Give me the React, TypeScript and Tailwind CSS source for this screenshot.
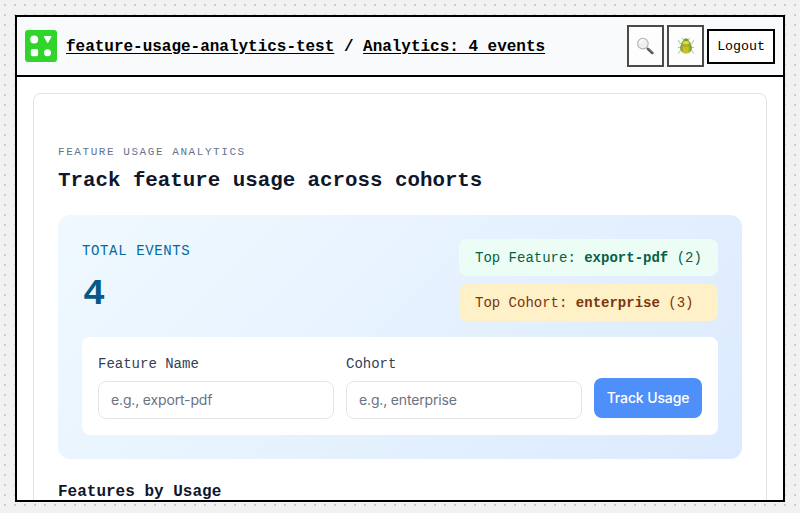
import React from 'react';

function Logo() {
  return (
    <svg className="h-8 w-8 shrink-0" viewBox="0 0 32 32">
      <rect width="32" height="32" rx="3" fill="#30d52c" />
      <circle cx="9.2" cy="9.6" r="4" fill="#fff" />
      <path d="M19.5 6.6h6.4l-3.2 5.7z" fill="#fff" stroke="#fff" strokeWidth="1.2" strokeLinejoin="round" />
      <rect x="5.8" y="19" width="7.3" height="7.2" rx="1.6" fill="#fff" />
      <circle cx="22.5" cy="22.7" r="3.5" fill="#fff" />
    </svg>
  );
}

function Magnifier() {
  return (
    <svg className="mr-px h-[18px] w-[18px]" viewBox="0 0 18 18">
      <path d="M10.8 10.8l1.8 1.8" stroke="#8b8b8b" strokeWidth="1.6" />
      <path d="M12.1 12.1l4.2 3.8" stroke="#555" strokeWidth="2.7" strokeLinecap="round" />
      <path d="M12.8 12l3.4 3.1" stroke="#8b8b8b" strokeWidth=".7" strokeLinecap="round" />
      <circle cx="6.9" cy="6.6" r="5.3" fill="#edf0f1" stroke="#b3b3b3" strokeWidth="1.1" />
      <path d="M3.6 6a3.6 3.6 0 0 1 3.2-2.8" fill="none" stroke="#fff" strokeWidth="1.2" />
    </svg>
  );
}

function Beetle() {
  return (
    <svg className="h-[18px] w-[18px]" viewBox="0 0 18 18">
      <defs>
        <linearGradient id="shell" x1="0" x2="1">
          <stop offset="0" stopColor="#5da034" />
          <stop offset=".4" stopColor="#e0c62a" />
          <stop offset=".6" stopColor="#dcc42a" />
          <stop offset="1" stopColor="#4c9430" />
        </linearGradient>
      </defs>
      <path
        d="M6.9 3.4L5.2 1.2M11.1 3.4l1.7-2.2M4.5 7.3L2.4 5.8 1.6 3.2M13.5 7.3l2.1-1.5.8-2.6M4 10.4H1.3M14 10.4h2.7M4.5 13.4l-2 .8-.9 2.1M13.5 13.4l2 .8.9 2.1"
        fill="none" stroke="#a1bc85" strokeWidth=".85" strokeLinecap="round"
      />
      <ellipse cx="9" cy="11" rx="5.9" ry="5.8" fill="url(#shell)" />
      <path d="M3.9 7.8C4.1 4.7 6.1 3 9 3s4.9 1.7 5.1 4.8c-3 1.2-7.2 1.2-10.2 0z" fill="#8fb332" />
      <ellipse cx="9" cy="5.8" rx="3" ry="1.7" fill="#f0d62f" />
      <path d="M6.1 3.6C6.6 2 7.7 1.5 9 1.5s2.4.5 2.9 2.1c-1.8.6-4 .6-5.8 0z" fill="#759c32" />
      <path d="M3.8 8.3c3.4 1.1 7 1.1 10.4 0M9 9.2v7.2" fill="none" stroke="#879029" strokeWidth=".5" />
    </svg>
  );
}

function Field({ label, placeholder }: { label: string; placeholder: string }) {
  return (
    <label className="flex w-[236px] flex-col">
      <span className="mb-[6px] text-sm leading-[21px] text-[#334155]">{label}</span>
      <input
        className="h-[38px] rounded-lg border border-[#e5e5e5] bg-white px-3 pb-0.5 font-[Inter,sans-serif] text-sm tracking-[-0.16px] placeholder:text-[#6b7280]"
        placeholder={placeholder}
      />
    </label>
  );
}

export default function App() {
  return (
    <div className="h-[513px] w-[800px] overflow-hidden bg-[#f2f2f2] bg-[conic-gradient(from_270deg_at_2px_2px,#ccc_90deg,transparent_0)] bg-[length:10px_10px] bg-[position:4px_4px] p-[15px] pb-[11px] font-['Liberation_Mono',monospace]">
      <div className="flex h-[487px] w-[770px] flex-col overflow-hidden border-2 border-black bg-white">
        <header className="flex h-[60px] shrink-0 items-center border-b-2 border-black bg-[#f8fafc] px-2">
          <Logo />
          <nav className="ml-[9px] flex-1 whitespace-pre pt-0.5 text-base font-bold tracking-[-0.02px] text-black">
            <a className="underline underline-offset-2">feature-usage-analytics-test</a> / <a className="underline underline-offset-2">Analytics: 4 events</a>
          </nav>
          <div className="flex items-center gap-[3px]">
            <button className="flex h-[42px] w-[37px] items-center justify-center border-2 border-[#4a4a4a] bg-[#fdfdfd]"><Magnifier /></button>
            <button className="flex h-[42px] w-[37px] items-center justify-center border-2 border-[#4a4a4a] bg-[#fdfdfd]"><Beetle /></button>
            <button className="h-[35px] w-[68px] border-2 border-black bg-white pt-0.5 text-[13.333px] tracking-[-0.05px] text-black">Logout</button>
          </div>
        </header>
        <main className="min-h-0 flex-1 overflow-hidden px-4 pt-4">
          <section className="h-[600px] rounded-lg border border-[#e2e2e4] bg-white px-6 pt-12">
            <p className="h-[18px] text-[11px] leading-[20px] tracking-[1.56px] text-[#64748b]">FEATURE USAGE ANALYTICS</p>
            <h1 className="mt-[5px] h-[31px] text-[20.8px] leading-[31px] font-bold text-[#0f172a]">Track feature usage across cohorts</h1>
            <div className="mt-[19px] h-[244px] rounded-xl bg-[linear-gradient(135deg,#f0f9ff,#dbeafe)] p-6">
              <div className="flex h-[82px] justify-between">
                <div>
                  <p className="text-sm leading-6 tracking-[0.63px] text-[#0369a1]">TOTAL EVENTS</p>
                  <p className="mt-[7px] pl-px text-[37px] leading-[48px] font-bold text-[#075985]">4</p>
                </div>
                <div className="flex w-[259px] flex-col gap-2 text-sm">
                  <div className="h-[37px] rounded-lg bg-[#ecfdf5] px-4 leading-[39px] text-[#065f46]">Top Feature: <strong>export-pdf</strong> (2)</div>
                  <div className="h-[37px] rounded-lg bg-[#fef1c7] px-4 leading-[39px] text-[#78350f]">Top Cohort: <strong>enterprise</strong> (3)</div>
                </div>
              </div>
              <form className="mt-4 flex h-[98px] items-end gap-3 rounded-lg bg-white p-4">
                <Field label="Feature Name" placeholder="e.g., export-pdf" />
                <Field label="Cohort" placeholder="e.g., enterprise" />
                <button type="button" className="mb-px h-10 w-[108px] rounded-lg bg-[#4f8ff9] font-[Inter,sans-serif] text-sm font-medium tracking-[-0.12px] text-white">Track Usage</button>
              </form>
            </div>
            <h2 className="mt-[21px] text-base leading-6 font-bold text-[#0f172a]">Features by Usage</h2>
          </section>
        </main>
      </div>
    </div>
  );
}
